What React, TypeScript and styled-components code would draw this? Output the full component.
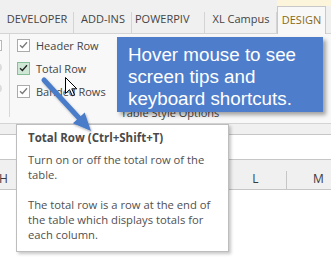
import React from 'react'
import styled, { createGlobalStyle } from 'styled-components'

const GlobalStyle = createGlobalStyle`
    html, body { margin: 0; padding: 0; background: #ffffff; }
    * { box-sizing: border-box; }
`

const uiFont = '"Open Sans", "Noto Sans", "DejaVu Sans", sans-serif'

const Screen = styled.div`
    position: relative;
    width: 331px;
    height: 263px;
    overflow: hidden;
    background: #ffffff;
    font-family: ${uiFont};
    font-size: 11px;
    color: #444444;
`

/* ---- tab row ---- */

const TabBar = styled.div`
    display: flex;
    height: 34px;
    background: #f0f0f0;
    border-bottom: 1px solid #d4d4d4;
`

const Tab = styled.div<{ $width: number; $align?: 'start' | 'center' }>`
    position: relative;
    display: flex;
    align-items: center;
    justify-content: ${(p) => (p.$align === 'start' ? 'flex-start' : 'center')};
    padding: 3px ${(p) => (p.$align === 'start' ? '0 0 3px' : '0 0 0')};
    width: ${(p) => p.$width}px;
    flex: none;
    color: #444444;
    white-space: nowrap;
    overflow: hidden;

    &::after {
        content: '';
        position: absolute;
        right: 0;
        top: 12px;
        bottom: 0;
        width: 1px;
        background: #d4d4d4;
    }
`

const ContextArea = styled.div`
    flex: 1;
    display: flex;
    flex-direction: column;
    border-top: 6px solid #fdf4dc;
`

const ActiveTab = styled.div`
    width: 49px;
    height: 29px;
    display: flex;
    align-items: center;
    justify-content: center;
    padding-bottom: 2px;
    margin-bottom: -1px;
    background: #f8f8f8;
    border: 1px solid #c8c8c8;
    border-bottom: none;
    color: #8a6a10;
`

/* ---- ribbon ---- */

const Ribbon = styled.div`
    display: flex;
    height: 90px;
    background: #f8f8f8;
    border-bottom: 1px solid #d4d4d4;
`

const PrevGroup = styled.div`
    width: 10px;
    flex: none;
    overflow: hidden;
    border-right: 1px solid #d8d8d8;
    margin-bottom: 6px;
    display: flex;
    flex-direction: column;
    align-items: flex-end;
    padding-top: 6px;
    gap: 12px;
`

const FadedBox = styled.div`
    width: 12px;
    height: 11px;
    margin-right: 7px;
    border: 1px solid #b8b8b8;
    background: #ffffff;
`

const FadedDot = styled.div`
    width: 9px;
    height: 9px;
    margin-right: 7px;
    border-radius: 50%;
    background: #dcdcdc;
`

const Group = styled.div`
    flex: 1;
    display: flex;
    flex-direction: column;
    padding: 5px 0 0 7px;
`

const Options = styled.div`
    display: flex;
    flex-direction: column;
    gap: 11px;
    height: 66px;
`

const OptionRow = styled.label`
    display: flex;
    align-items: center;
    gap: 6px;
    height: 12px;
    color: #444444;
    white-space: nowrap;
`

const Box = styled.span<{ $hot?: boolean }>`
    width: 13px;
    height: 13px;
    flex: none;
    display: flex;
    align-items: center;
    justify-content: center;
    border: 1px solid ${(p) => (p.$hot ? '#86bf98' : '#ababab')};
    background: ${(p) => (p.$hot ? '#cfe8d6' : '#ffffff')};
`

const GroupLabel = styled.div`
    text-align: center;
    padding-right: 8px;
    line-height: 15px;
    color: #444444;
`

/* ---- sheet ---- */

const Gap = styled.div`
    height: 11px;
    background: #f0f0f0;
    border-bottom: 1px solid #c6c6c6;
`

const FormulaBar = styled.div`
    height: 25px;
    background: #ffffff;
    border-bottom: 1px solid #c6c6c6;
`

const ColumnHeads = styled.div`
    display: flex;
    height: 30px;
    margin-left: -28px;
    background: #f0f0f0;
    border-bottom: 1px solid #c6c6c6;
`

const ColumnHead = styled.div`
    position: relative;
    width: 63px;
    flex: none;
    display: flex;
    align-items: flex-end;
    justify-content: center;
    padding-bottom: 2px;
    font-size: 12px;
    color: #3a3a3a;

    &::after {
        content: '';
        position: absolute;
        right: 0;
        top: 11px;
        bottom: 0;
        width: 1px;
        background: #c6c6c6;
    }
`

/* ---- overlays ---- */

const Callout = styled.div`
    position: absolute;
    left: 117px;
    top: 37px;
    width: 206px;
    height: 75px;
    padding: 7px 0 0 11px;
    background: #4e7ecb;
    color: #ffffff;
    font-family: "Liberation Sans", Arial, sans-serif;
    font-size: 18.8px;
    line-height: 22px;
    box-shadow: 3px 3px 4px rgba(0, 0, 0, 0.35);
`

const ScreenTip = styled.div`
    position: absolute;
    left: 16px;
    top: 124px;
    width: 213px;
    height: 128px;
    padding: 5px 6px 0 11px;
    background: #ffffff;
    border: 1px solid #bdbdbd;
    box-shadow: 2px 2px 3px rgba(0, 0, 0, 0.22);
    font-size: 11.25px;
    line-height: 15px;
    color: #505050;
`

const TipTitle = styled.div`
    font-weight: 700;
    font-size: 11.5px;
    color: #4a4a4a;
    margin-bottom: 7px;
`

const TipText = styled.p`
    margin: 0 0 15px;
`

const Pointer = styled.svg`
    position: absolute;
    left: 38px;
    top: 74px;
    overflow: visible;
`

const Cursor = styled.svg`
    position: absolute;
    left: 65px;
    top: 77px;
`

const Check = ({ dark }: { dark?: boolean }) => (
    <svg width="9" height="8" viewBox="0 0 9 8">
        <path d="M1 4.2 L3.4 6.5 L8 1.2" fill="none" stroke={dark ? '#1f1f1f' : '#7a7a7a'} strokeWidth="1.3" />
    </svg>
)

const tabs = [
    { label: 'DEVELOPER', width: 74 },
    { label: 'ADD-INS', width: 58 },
    { label: 'POWERPIV', width: 73, align: 'start' as const },
    { label: 'XL Campus', width: 72 },
]

// I, J and K sit under the screen tip, so only the visible letters are printed
const columns = [
    { id: 'H', shown: true },
    { id: 'I', shown: false },
    { id: 'J', shown: false },
    { id: 'K', shown: false },
    { id: 'L', shown: true },
    { id: 'M', shown: true },
]

const App = (): JSX.Element => (
    <Screen>
        <GlobalStyle />
        <TabBar>
            {tabs.map(({ label, width, align }) => (
                <Tab key={label} $width={width} $align={align}>
                    {label}
                </Tab>
            ))}
            <ContextArea>
                <ActiveTab>DESIGN</ActiveTab>
            </ContextArea>
        </TabBar>

        <Ribbon>
            <PrevGroup>
                <FadedBox />
                <FadedDot />
                <FadedDot />
            </PrevGroup>
            <Group>
                <Options>
                    <OptionRow>
                        <Box><Check /></Box>
                        Header Row
                    </OptionRow>
                    <OptionRow>
                        <Box $hot><Check dark /></Box>
                        Total Row
                    </OptionRow>
                    <OptionRow>
                        <Box><Check /></Box>
                        Banded Rows
                    </OptionRow>
                </Options>
                <GroupLabel>Table Style Options</GroupLabel>
            </Group>
        </Ribbon>

        <Gap />
        <FormulaBar />
        <ColumnHeads>
            {columns.map(({ id, shown }) => (
                <ColumnHead key={id}>{shown ? id : null}</ColumnHead>
            ))}
        </ColumnHeads>

        <Callout>
            Hover mouse to see
            <br />
            screen tips and
            <br />
            keyboard shortcuts.
        </Callout>

        <ScreenTip>
            <TipTitle>Total Row (Ctrl+Shift+T)</TipTitle>
            <TipText>Turn on or off the total row of the table.</TipText>
            <TipText>The total row is a row at the end of the table which displays totals for each column.</TipText>
        </ScreenTip>

        <Pointer width="60" height="62" viewBox="0 0 60 62">
            <defs>
                <filter id="arrowShadow" x="-20%" y="-20%" width="150%" height="150%">
                    <feDropShadow dx="1" dy="1.5" stdDeviation="1" floodColor="#000" floodOpacity="0.3" />
                </filter>
            </defs>
            <g filter="url(#arrowShadow)" fill="#4a7bc9">
                <path d="M6 6 L41 44" stroke="#4a7bc9" strokeWidth="5" strokeLinecap="round" />
                <path d="M53 57 L34.9 49.2 L46.7 38.4 Z" />
            </g>
        </Pointer>

        <Cursor width="13" height="20" viewBox="0 0 13 20">
            <path
                d="M0.5 0.5 V16.5 L4.5 12.7 L7.3 18.8 L9.5 17.8 L6.8 11.8 H11.8 Z"
                fill="#ffffff"
                stroke="#000000"
                strokeWidth="1"
                strokeLinejoin="round"
            />
        </Cursor>
    </Screen>
)

export default App
